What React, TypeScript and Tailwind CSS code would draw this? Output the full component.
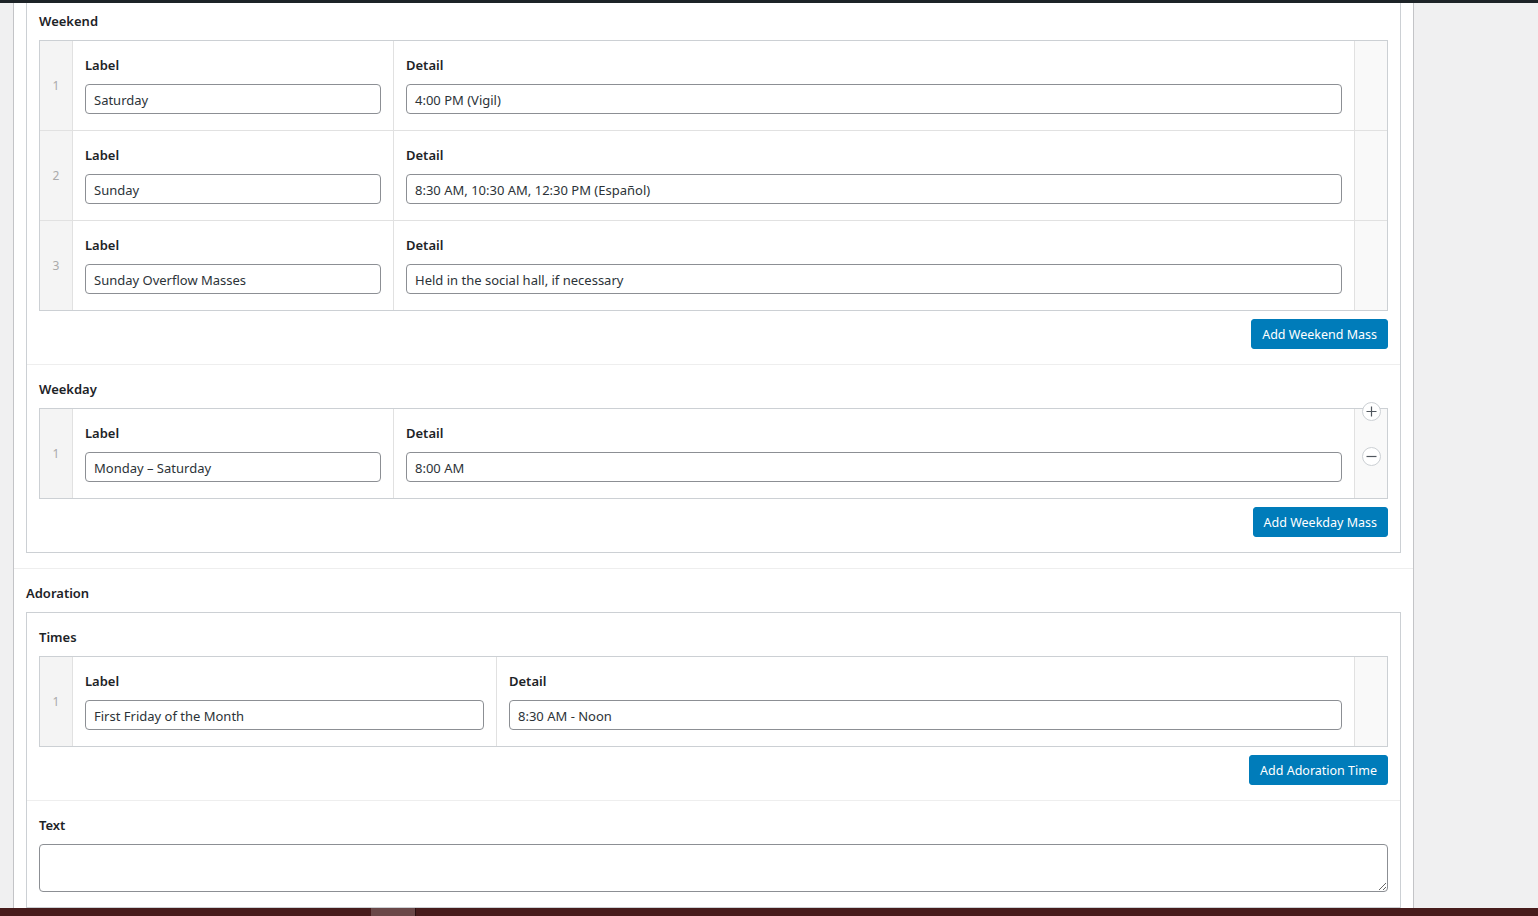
import React from "react";

const font = { fontFamily: '"Noto Sans", "Open Sans", Arial, sans-serif' };

type Row = { label: string; detail: string };

function FieldLabel({ children }: { children: React.ReactNode }) {
  return (
    <div className="h-[18px] leading-[19px] text-[13px] font-semibold text-[#1d2327] mb-[10px]">
      {children}
    </div>
  );
}

function TextInput({ value }: { value: string }) {
  return (
    <div className="h-[30px] w-full rounded-[4px] border border-[#8c8f94] bg-white px-[8px] pt-[2px] text-[13px] leading-[26px] text-[#2c3338] whitespace-nowrap overflow-hidden">
      {value}
    </div>
  );
}

function Repeater({
  rows,
  labelWidth,
  hoverRow,
}: {
  rows: Row[];
  labelWidth: string;
  hoverRow?: number;
}) {
  return (
    <div className="border border-[#ccd0d4] bg-white">
      {rows.map((r, i) => (
        <div
          key={i}
          className={`flex ${i > 0 ? "border-t border-[#e1e1e1]" : ""}`}
        >
          <div className="w-[33px] shrink-0 bg-[#f4f4f4] border-r border-[#e1e1e1] flex items-center justify-center text-[12px] text-[#aaa]">
            {i + 1}
          </div>
          <div className={`${labelWidth} shrink-0 border-r border-[#e1e1e1] px-[12px] pt-[15px] pb-[16px]`}>
            <FieldLabel>Label</FieldLabel>
            <TextInput value={r.label} />
          </div>
          <div className="flex-1 px-[12px] pt-[15px] pb-[16px]">
            <FieldLabel>Detail</FieldLabel>
            <TextInput value={r.detail} />
          </div>
          <div className="relative w-[33px] shrink-0 bg-[#f9f9f9] border-l border-[#e1e1e1]">
            {hoverRow === i && (
              <>
                <div className="absolute left-[7px] top-[-7px] h-[19px] w-[19px] rounded-full border border-[#ccd0d4] bg-white flex items-center justify-center">
                  <svg width="11" height="11" viewBox="0 0 11 11">
                    <path d="M5.5 0.5v10M0.5 5.5h10" stroke="#50575e" strokeWidth="1.2" />
                  </svg>
                </div>
                <div className="absolute left-[7px] top-[38px] h-[19px] w-[19px] rounded-full border border-[#ccd0d4] bg-white flex items-center justify-center">
                  <svg width="11" height="11" viewBox="0 0 11 11">
                    <path d="M0.5 5.5h10" stroke="#50575e" strokeWidth="1.2" />
                  </svg>
                </div>
              </>
            )}
          </div>
        </div>
      ))}
    </div>
  );
}

function AddButton({ children }: { children: React.ReactNode }) {
  return (
    <div className="flex justify-end mt-[8px]">
      <div className="h-[30px] rounded-[3px] border border-[#007cba] bg-[#007cba] px-[10px] pt-[1px] text-[12.5px] leading-[27px] text-white whitespace-nowrap">
        {children}
      </div>
    </div>
  );
}

export default function App() {
  return (
    <div className="h-[916px] w-[1538px] overflow-hidden flex flex-col bg-[#f0f0f1]" style={font}>
      <div className="h-[3px] bg-[#1d2327] shrink-0" />
      <div className="flex flex-1 min-h-0">
        <div className="w-[13px] shrink-0" />
        <div className="w-[1401px] shrink-0 bg-white border-x border-[#c3c4c7] overflow-hidden">
          {/* Mass times group (continued from above) */}
          <div className="px-[12px] pb-[15px]">
            <div className="border-x border-b border-[#ccd0d4]">
              <div className="px-[12px] pt-[9px] pb-[15px]">
                <FieldLabel>Weekend</FieldLabel>
                <Repeater
                  labelWidth="w-[321px]"
                  rows={[
                    { label: "Saturday", detail: "4:00 PM (Vigil)" },
                    { label: "Sunday", detail: "8:30 AM, 10:30 AM, 12:30 PM (Español)" },
                    { label: "Sunday Overflow Masses", detail: "Held in the social hall, if necessary" },
                  ]}
                />
                <AddButton>Add Weekend Mass</AddButton>
              </div>
              <div className="border-t border-[#eeeeee] px-[12px] pt-[15px] pb-[15px]">
                <FieldLabel>Weekday</FieldLabel>
                <Repeater
                  labelWidth="w-[321px]"
                  hoverRow={0}
                  rows={[{ label: "Monday – Saturday", detail: "8:00 AM" }]}
                />
                <AddButton>Add Weekday Mass</AddButton>
              </div>
            </div>
          </div>
          {/* Adoration */}
          <div className="border-t border-[#eeeeee] px-[12px] pt-[15px]">
            <FieldLabel>Adoration</FieldLabel>
            <div className="border border-[#ccd0d4]">
              <div className="px-[12px] pt-[15px] pb-[15px]">
                <FieldLabel>Times</FieldLabel>
                <Repeater
                  labelWidth="w-[424px]"
                  rows={[{ label: "First Friday of the Month", detail: "8:30 AM - Noon" }]}
                />
                <AddButton>Add Adoration Time</AddButton>
              </div>
              <div className="border-t border-[#eeeeee] px-[12px] pt-[15px] pb-[15px]">
                <FieldLabel>Text</FieldLabel>
                <textarea
                  className="block h-[48px] w-full rounded-[4px] border border-[#8c8f94] bg-white px-[8px] text-[14px] outline-none"
                  defaultValue=""
                />
              </div>
            </div>
          </div>
        </div>
        <div className="flex-1" />
      </div>
      <div className="h-[8px] shrink-0 bg-[#471c1c] flex">
        <div className="w-[371px]" />
        <div className="w-[44px] bg-[#6a4848]" />
        <div className="w-[1px] bg-[#2a1010]" />
      </div>
    </div>
  );
}
